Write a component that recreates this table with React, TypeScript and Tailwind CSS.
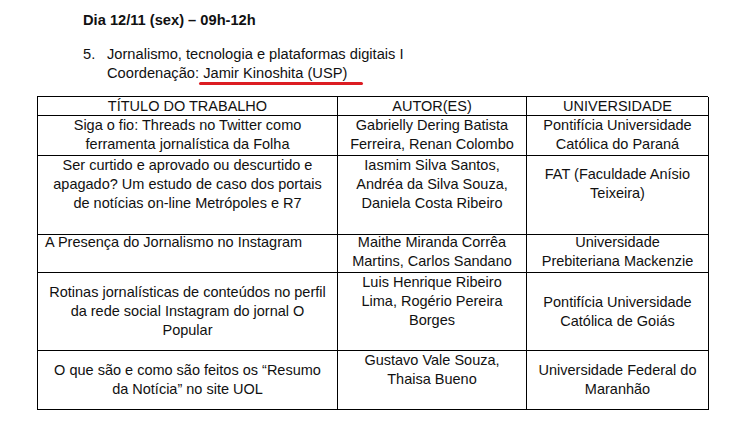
type Cell = {
  lines: string[]
  align?: 'top' | 'middle'
  pad?: string
  left?: boolean
}

type Row = {
  height: string
  cells: Cell[]
}

const rows: Row[] = [
  {
    height: 'h-[40px]',
    cells: [
      { lines: ['Siga o fio: Threads no Twitter como', 'ferramenta jornalística da Folha'] },
      { lines: ['Gabrielly Dering Batista', 'Ferreira, Renan Colombo'] },
      { lines: ['Pontifícia Universidade', 'Católica do Paraná'] },
    ],
  },
  {
    height: 'h-[79px]',
    cells: [
      {
        lines: [
          'Ser curtido e aprovado ou descurtido e',
          'apagado? Um estudo de caso dos portais',
          'de notícias on-line Metrópoles e R7',
        ],
      },
      { lines: ['Iasmim Silva Santos,', 'Andréa da Silva Souza,', 'Daniela Costa Ribeiro'] },
      { lines: ['FAT (Faculdade Anísio', 'Teixeira)'], pad: 'pt-[9px]' },
    ],
  },
  {
    height: 'h-[38px]',
    cells: [
      { lines: ['A Presença do Jornalismo no Instagram'], left: true, pad: '-mt-[2px]' },
      { lines: ['Maithe Miranda Corrêa', 'Martins, Carlos Sandano'], pad: '-mt-[2px]' },
      { lines: ['Universidade', 'Prebiteriana Mackenzie'], pad: '-mt-[2px]' },
    ],
  },
  {
    height: 'h-[78px]',
    cells: [
      {
        lines: [
          'Rotinas jornalísticas de conteúdos no perfil',
          'da rede social Instagram do jornal O',
          'Popular',
        ],
        align: 'middle',
      },
      { lines: ['Luis Henrique Ribeiro', 'Lima, Rogério Pereira', 'Borges'] },
      { lines: ['Pontifícia Universidade', 'Católica de Goiás'], align: 'middle' },
    ],
  },
  {
    height: 'h-[59px]',
    cells: [
      {
        lines: ['O que são e como são feitos os “Resumo', 'da Notícia” no site UOL'],
        align: 'middle',
      },
      { lines: ['Gustavo Vale Souza,', 'Thaisa Bueno'] },
      { lines: ['Universidade Federal do', 'Maranhão'], align: 'middle' },
    ],
  },
]

function TableCell({ cell, height }: { cell: Cell; height: string }) {
  return (
    <div
      className={`flex flex-col border-r border-b border-black px-[7px] ${height} ${
        cell.align === 'middle' ? 'justify-center' : 'justify-start'
      } ${cell.left ? 'text-left' : 'text-center'}`}
    >
      <div className={cell.pad ?? ''}>
        {cell.lines.map((line, i) => (
          <div key={i} className="whitespace-nowrap">
            {line}
          </div>
        ))}
      </div>
    </div>
  )
}

export default function App() {
  return (
    <div
      className="h-[437px] w-[733px] overflow-hidden bg-white text-[#111] text-[14.5px] leading-[19px]"
      style={{ fontFamily: '"Liberation Sans", Arial, sans-serif' }}
    >
      <div className="pl-[83px] pt-[11px]">
        <p className="text-[14.67px] font-bold leading-[19px]">Dia 12/11 (sex) – 09h-12h</p>

        <div className="mt-[15px] flex text-[14.67px]">
          <span className="w-[24px]">5.</span>
          <div>
            <p>Jornalismo, tecnologia e plataformas digitais I</p>
            <p>
              Coordenação:{' '}
              <span className="relative">
                Jamir Kinoshita (USP)
                <span className="absolute -left-[4px] -right-[16px] top-[17px] h-[3px] rounded-full bg-[#dc1c22]" />
              </span>
            </p>
          </div>
        </div>
      </div>

      <div className="ml-[37px] mt-[13px] grid w-[671px] grid-cols-[300px_189px_182px] border-l border-t border-black">
        {['TÍTULO DO TRABALHO', 'AUTOR(ES)', 'UNIVERSIDADE'].map((h) => (
          <div
            key={h}
            className="flex h-[19px] items-center justify-center border-r border-b border-black leading-[18px]"
          >
            {h}
          </div>
        ))}
        {rows.map((row, r) =>
          row.cells.map((cell, c) => (
            <TableCell key={`${r}-${c}`} cell={cell} height={row.height} />
          )),
        )}
      </div>
    </div>
  )
}
